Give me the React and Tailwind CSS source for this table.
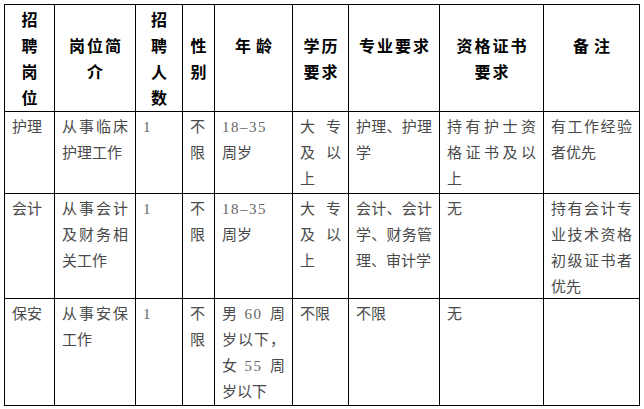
import React from 'react';

const COLS = 'grid-cols-[50px_81px_47px_32px_78px_56px_91px_104px_96px]';

const HEAD = [
  { lines: ['招', '聘', '岗', '位'] },
  { lines: ['岗位简', '介'] },
  { lines: ['招', '聘', '人', '数'] },
  { lines: ['性', '别'] },
  { lines: ['年龄', ' '], wide: true },
  { lines: ['学历', '要求'] },
  { lines: ['专业要求', ' '] },
  { lines: ['资格证书', '要求'] },
  { lines: ['备注', ' '], wide: true },
];

const ROWS = [
  [
    ['护理'],
    ['从事临床', '护理工作'],
    ['1'],
    ['不', '限'],
    ['18–35', '周岁'],
    ['大专', '及以', '上'],
    ['护理、护理', '学'],
    ['持有护士资', '格证书及以', '上'],
    ['有工作经验', '者优先'],
  ],
  [
    ['会计'],
    ['从事会计', '及财务相', '关工作'],
    ['1'],
    ['不', '限'],
    ['18–35', '周岁'],
    ['大专', '及以', '上'],
    ['会计、会计', '学、财务管', '理、审计学'],
    ['无'],
    ['持有会计专', '业技术资格', '初级证书者', '优先'],
  ],
  [
    ['保安'],
    ['从事安保', '工作'],
    ['1'],
    ['不', '限'],
    ['男60周', '岁以下，', '女55周', '岁以下'],
    ['不限'],
    ['不限'],
    ['无'],
    [],
  ],
];

const tokens = (s) => s.match(/\d+–\d+|\d+|./g) || [];

function Token({ t }) {
  if (/\d/.test(t)) {
    return <span className="text-[#666] tracking-[1.5px]">{t}</span>;
  }
  return <span>{t}</span>;
}

function Line({ text, justify }) {
  const parts = tokens(text);
  if (justify && parts.length > 1) {
    return (
      <div className="flex justify-between">
        {parts.map((t, i) => <Token key={i} t={t} />)}
      </div>
    );
  }
  return (
    <div className="whitespace-nowrap">
      {parts.map((t, i) => <Token key={i} t={t} />)}
    </div>
  );
}

function HeadCell({ lines, wide }) {
  return (
    <div className="border-r border-b border-black flex flex-col justify-center items-center">
      {lines.map((l, i) => (
        <div
          key={i}
          className={`whitespace-pre ${wide ? 'tracking-[5px] pl-[5px]' : 'tracking-[2px] pl-[2px]'}`}
        >
          {l}
        </div>
      ))}
    </div>
  );
}

function BodyCell({ lines }) {
  return (
    <div className="border-r border-b border-black px-[7px] pt-[2px]">
      {lines.map((l, i) => (
        <Line key={i} text={l} justify={i < lines.length - 1} />
      ))}
    </div>
  );
}

export default function App() {
  return (
    <div className="w-[644px] h-[409px] bg-white pt-[4px] pl-[4px]">
      <div
        className={`grid ${COLS} grid-rows-[107px_82px_105px_107px] w-fit border-l border-t border-black`}
      >
        <div className="contents font-bold text-[16px] leading-[26px] text-black [font-family:'Noto_Sans_CJK_SC',sans-serif]">
          {HEAD.map((h, i) => <HeadCell key={i} {...h} />)}
        </div>
        <div className="contents text-[15px] leading-[26px] text-[#4a4a4a] [font-family:'Liberation_Serif','Noto_Sans_CJK_SC',serif]">
          {ROWS.map((row, r) =>
            row.map((cell, c) => <BodyCell key={`${r}-${c}`} lines={cell} />)
          )}
        </div>
      </div>
    </div>
  );
}
